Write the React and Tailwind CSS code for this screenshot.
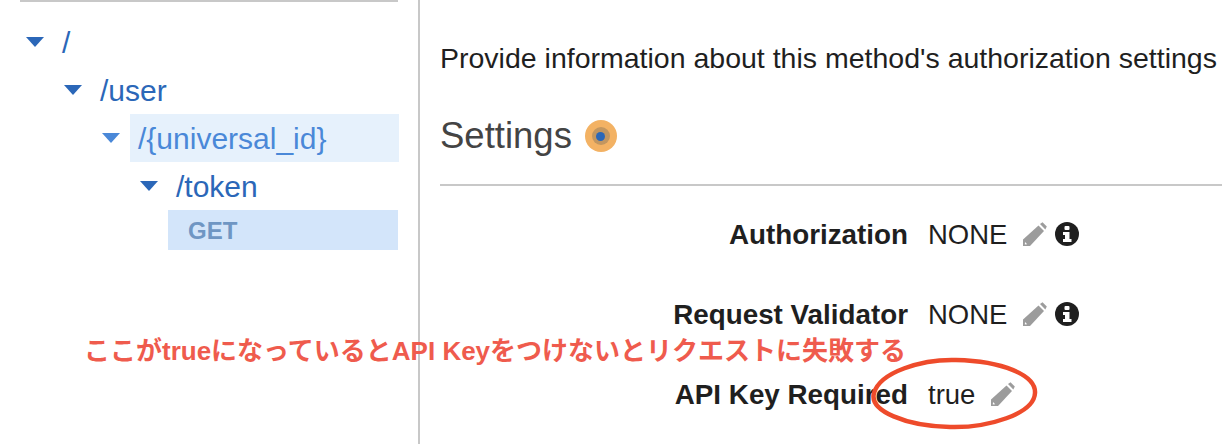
import React from 'react';

const treeRows = [
  { label: '/', indent: 'ml-[26px]', arrow: 'border-t-[#2b67b8]', text: 'text-[#2b67b8]' },
  { label: '/user', indent: 'ml-[64px]', arrow: 'border-t-[#2b67b8]', text: 'text-[#2b67b8]' },
  { label: '/{universal_id}', indent: 'ml-[102px]', arrow: 'border-t-[#4a88d8]', text: 'text-[#4a88d8]', selected: true },
  { label: '/token', indent: 'ml-[140px]', arrow: 'border-t-[#2b67b8]', text: 'text-[#2b67b8]' },
];

const settings = [
  { label: 'Authorization', value: 'NONE', info: true },
  { label: 'Request Validator', value: 'NONE', info: true },
  { label: 'API Key Required', value: 'true', info: false },
];

const PencilIcon = () => (
  <svg className="ml-[16px] shrink-0" width="24" height="24" viewBox="0 0 24 24" fill="#9c9c9c">
    <path d="M0 24V17.5L15.5 3.5L21 9L7 24Z" />
    <path d="M17 2L19.5 0.3L23.8 4.5L22.3 7.5Z" />
    <path d="M2 20L4.2 22.2L1.8 22.6Z" fill="#ffffff" />
  </svg>
);

const InfoIcon = () => (
  <svg className="ml-[8px] shrink-0" width="24" height="24" viewBox="0 0 24 24">
    <circle cx="12" cy="12" r="12" fill="#1f1f1f" />
    <rect x="9.5" y="4" width="5" height="4" rx="1" fill="#ffffff" />
    <path d="M8 10H14.5V17H16.5V20H8V17H10V13H8Z" fill="#ffffff" />
  </svg>
);

const App = () => {
  return (
    <div className="relative flex h-[444px] w-[1222px] overflow-hidden bg-white font-['Liberation_Sans',sans-serif]">
      {/* resource tree */}
      <div className="h-full w-[420px] shrink-0 border-r-2 border-[#c8c8c8] pr-[20px]">
        <div className="ml-[20px] h-[2px] bg-[#c8c8c8]" />
        <div className="mt-[16px] flex flex-col">
          {treeRows.map((row) => (
            <div key={row.label} className={`flex h-[48px] items-center ${row.indent} ${row.selected ? 'mr-[-1px]' : ''}`}>
              <div className="w-[28px]">
                <div className={`h-0 w-0 border-x-[9px] border-t-[10px] border-x-transparent ${row.arrow}`} />
              </div>
              <div
                className={`flex h-full flex-1 items-center pl-2 text-[30px] ${row.text} ${
                  row.selected ? 'bg-[#e6f1fc]' : ''
                }`}
              >
                {row.label}
              </div>
            </div>
          ))}
          <div className="ml-[168px] flex h-[40px] items-center bg-[#d3e5fa] pl-5 pt-[2px] text-[24px] font-bold text-[#6f96c3]">
            GET
          </div>
        </div>
      </div>

      {/* method settings */}
      <div className="flex-1 pl-[20px]">
        <p className="mt-[41px] whitespace-nowrap text-[28.5px] leading-[34px] text-[#1f1f1f]">
          Provide information about this method's authorization settings
        </p>
        <div className="mt-[35px] flex h-[52px] items-center gap-[13px]">
          <h2 className="text-[36.5px] text-[#444444]">Settings</h2>
          <div className="flex h-[32px] w-[32px] items-center justify-center rounded-full bg-[#f3b264]">
            <div className="flex h-[18px] w-[18px] items-center justify-center rounded-full bg-[#c29660]">
              <div className="h-[9px] w-[9px] rounded-full bg-[#2b67b8]" />
            </div>
          </div>
        </div>
        <div className="mt-[22px] h-[2px] bg-[#c8c8c8]" />
        <div className="mt-[8px] flex flex-col">
          {settings.map((row) => (
            <div key={row.label} className="flex h-[80px] items-center text-[#1f1f1f]">
              <div className="w-[468px] whitespace-nowrap pt-[2px] text-right text-[27.8px] font-bold">{row.label}</div>
              <div className="ml-[20px] pt-[2px] text-[27.5px]">{row.value}</div>
              <PencilIcon />
              {row.info && <InfoIcon />}
            </div>
          ))}
        </div>
      </div>

      {/* red annotation on top of the screenshot */}
      <div className="absolute left-[84px] top-[335px] whitespace-nowrap text-[26px] leading-[32px] font-bold text-[#ef5b4d] font-['Liberation_Sans','Noto_Sans_CJK_JP',sans-serif]">
        ここがtrueになっているとAPI Keyをつけないとリクエストに失敗する
      </div>
      <svg className="absolute left-[860px] top-[350px]" width="190" height="90" viewBox="0 0 190 90" fill="none">
        <path
          d="M14 43 C20 22 62 9 96 10 C142 11 176 25 175 43 C174 64 128 78 90 77 C46 76 9 61 14 43 Z"
          stroke="#ee4b2b"
          strokeWidth="4.5"
        />
      </svg>
    </div>
  );
};

export default App;
